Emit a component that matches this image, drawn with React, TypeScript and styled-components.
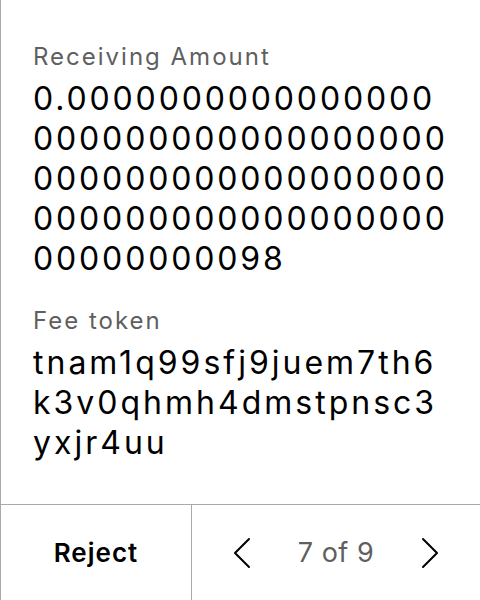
import React from "react";
import styled, { createGlobalStyle } from "styled-components";

const Global = createGlobalStyle`
  html, body { margin: 0; padding: 0; background: #fff; }
  body {
    font-family: Inter, "Noto Sans", sans-serif;
    -webkit-font-smoothing: antialiased;
  }
  * { box-sizing: border-box; }
`;

const Screen = styled.div`
  width: 480px;
  height: 600px;
  display: flex;
  flex-direction: column;
  border-left: 1px solid #aaaaaa;
  background: #fff;
  overflow: hidden;
`;

const Content = styled.div`
  flex: 1;
  display: flex;
  flex-direction: column;
  gap: 26px;
  padding: 41px 29px 0 32px;
  overflow: hidden;
`;

const Field = styled.div`
  display: flex;
  flex-direction: column;
`;

const Label = styled.div`
  font-size: 24px;
  line-height: 32px;
  letter-spacing: 2px;
  color: #5f5f5f;
  margin-bottom: 6px;
`;

const Value = styled.div<{ $spacing: number }>`
  font-size: 32px;
  line-height: 40px;
  letter-spacing: ${(p) => p.$spacing}px;
  color: #000;
  word-break: break-all;
`;

const Footer = styled.div`
  height: 96px;
  flex: none;
  display: grid;
  grid-template-columns: 191px 1fr;
  border-top: 1px solid #aaaaaa;
`;

const RejectButton = styled.button`
  border: none;
  border-right: 1px solid #aaaaaa;
  background: none;
  font-family: Inter, sans-serif;
  font-size: 26px;
  font-weight: 600;
  letter-spacing: 1px;
  color: #000;
  padding: 0;
  display: flex;
  align-items: center;
  justify-content: center;
`;

const Pager = styled.div`
  display: flex;
  align-items: center;
  justify-content: space-between;
  padding: 0 26px;
`;

const NavButton = styled.button`
  width: 48px;
  height: 48px;
  border: none;
  background: none;
  padding: 0;
  display: flex;
  align-items: center;
  justify-content: center;
  color: #000;
`;

const PageText = styled.span`
  font-size: 27px;
  letter-spacing: 0.5px;
  color: #5f5f5f;
`;

const Chevron = ({ dir }: { dir: "left" | "right" }) => (
  <svg width="20" height="32" viewBox="0 0 20 32" fill="none">
    <path
      d={dir === "left" ? "M17 2 L3 16 L17 30" : "M3 2 L17 16 L3 30"}
      stroke="currentColor"
      strokeWidth="2"
      strokeLinecap="round"
      strokeLinejoin="round"
    />
  </svg>
);

export default function App() {
  const amount = "0." + "0".repeat(79) + "98";
  return (
    <>
      <Global />
      <Screen>
        <Content>
          <Field>
            <Label>Receiving Amount</Label>
            <Value $spacing={2.85}>{amount}</Value>
          </Field>
          <Field>
            <Label>Fee token</Label>
            <Value $spacing={3}>tnam1q99sfj9juem7th6k3v0qhmh4dmstpnsc3yxjr4uu</Value>
          </Field>
        </Content>
        <Footer>
          <RejectButton>Reject</RejectButton>
          <Pager>
            <NavButton aria-label="Previous">
              <Chevron dir="left" />
            </NavButton>
            <PageText>7 of 9</PageText>
            <NavButton aria-label="Next">
              <Chevron dir="right" />
            </NavButton>
          </Pager>
        </Footer>
      </Screen>
    </>
  );
}
